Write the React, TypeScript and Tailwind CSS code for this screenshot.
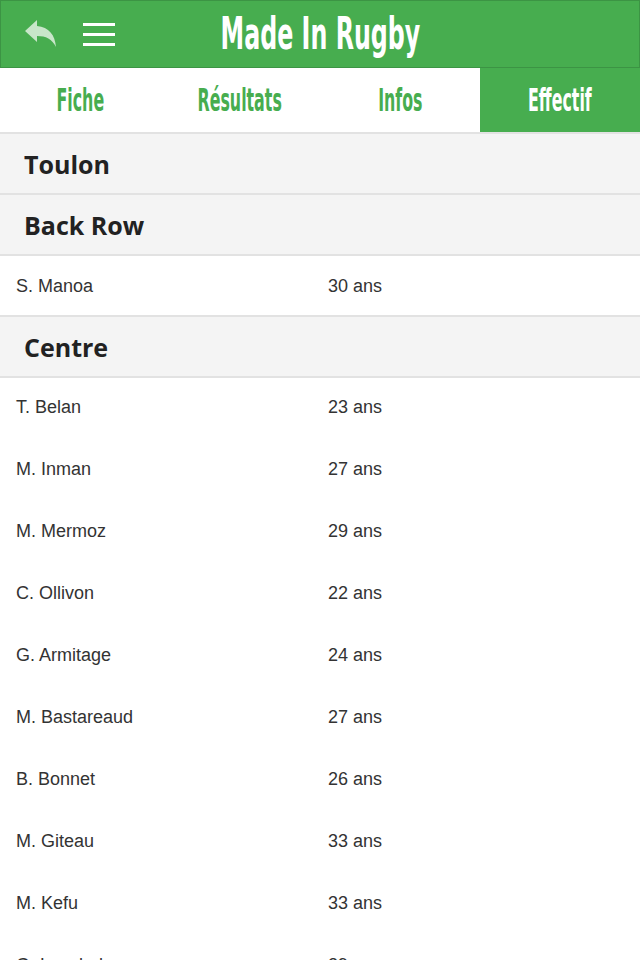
import React from 'react';

type Row = { name: string; age: number };

const sections: { title: string; rows: Row[] }[] = [
  { title: 'Toulon', rows: [] },
  { title: 'Back Row', rows: [{ name: 'S. Manoa', age: 30 }] },
  {
    title: 'Centre',
    rows: [
      { name: 'T. Belan', age: 23 },
      { name: 'M. Inman', age: 27 },
      { name: 'M. Mermoz', age: 29 },
      { name: 'C. Ollivon', age: 22 },
      { name: 'G. Armitage', age: 24 },
      { name: 'M. Bastareaud', age: 27 },
      { name: 'B. Bonnet', age: 26 },
      { name: 'M. Giteau', age: 33 },
      { name: 'M. Kefu', age: 33 },
      { name: 'G. Lovobalavu', age: 29 },
    ],
  },
];

const tabs = ['Fiche', 'Résultats', 'Infos', 'Effectif'];

const condensed = { fontFamily: '"DejaVu Sans Condensed", "Liberation Sans", sans-serif' };

export default function App() {
  return (
    <div className="w-[640px] h-[960px] overflow-hidden bg-white">
      {/* top bar */}
      <div className="h-[68px] bg-[#47ad4f] border border-[#3c9444] flex items-center relative">
        <div className="flex items-center gap-[22px] pl-[22px] absolute left-0 top-0 h-full">
          <svg width="34" height="30" viewBox="0 0 34 30" className="opacity-85">
            <path d="M2 12 L14 1 L14 7 C26 8 32 16 33 28 C29 20 23 17 14 17 L14 23 Z" fill="#dff0df" />
          </svg>
          <div className="flex flex-col gap-[7px] ml-[4px]">
            <span className="block w-[32px] h-[3px] bg-white" />
            <span className="block w-[32px] h-[3px] bg-white" />
            <span className="block w-[32px] h-[3px] bg-white" />
          </div>
        </div>
        <h1 className="w-full text-center text-white font-bold text-[44px] leading-none" style={condensed}>
          <span className="inline-block scale-x-[0.6] origin-center">Made In Rugby</span>
        </h1>
      </div>

      {/* tabs */}
      <div className="flex h-[66px] border-b-2 border-[#e2e2e2]">
        {tabs.map((t, i) => (
          <div
            key={t}
            className={
              i === 3
                ? 'flex-1 flex items-center justify-center bg-[#47ad4f] text-white text-[32px] font-bold'
                : 'flex-1 flex items-center justify-center bg-white text-[#47ad4f] text-[32px] font-bold'
            }
            style={condensed}
          >
            <span className="inline-block scale-x-[0.55] origin-center leading-none">{t}</span>
          </div>
        ))}
      </div>

      {/* list */}
      <div>
        {sections.map((s) => (
          <div key={s.title}>
            <div
              className="h-[61px] bg-[#f4f4f4] border-b-2 border-[#e2e2e2] flex items-center pl-[24px] pt-[2px] text-[25px] font-bold text-[#222]"
              style={{ fontFamily: '"Open Sans", sans-serif' }}
            >
              {s.title}
            </div>
            {s.rows.map((r, i) => (
              <div
                key={r.name}
                className={
                  i === s.rows.length - 1 && s.title !== 'Centre'
                    ? 'h-[61px] flex items-center pt-[2px] text-[18px] text-[#333] border-b-2 border-[#e2e2e2]'
                    : 'h-[62px] flex items-center pb-[4px] text-[18px] text-[#333]'
                }
                style={{ fontFamily: '"Liberation Sans", Arial, sans-serif' }}
              >
                <span className="w-[328px] pl-[16px]">{r.name}</span>
                <span>{r.age} ans</span>
              </div>
            ))}
          </div>
        ))}
      </div>
    </div>
  );
}
